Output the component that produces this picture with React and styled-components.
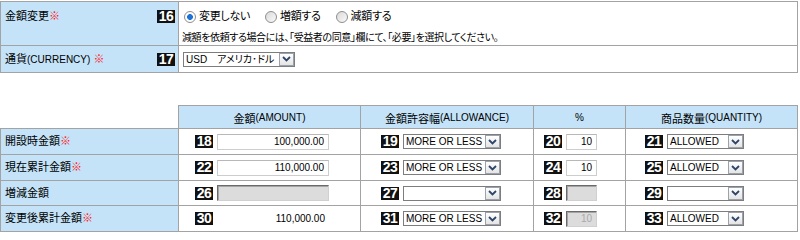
import React from 'react';
import styled, { createGlobalStyle } from 'styled-components';

const GlobalStyle = createGlobalStyle`
  html, body {
    margin: 0;
    padding: 0;
    background: #fff;
  }
  body {
    font-family: "Liberation Sans", "Noto Sans CJK JP", sans-serif;
    font-size: 11px;
    color: #000;
    font-feature-settings: "palt";
  }
`;

const LINE = '1px solid #a3a3a3';
const HEAD_BG = '#c4e3f8';

// data
const rows = [
  {
    label: '開設時金額',
    req: true,
    no: [18, 19, 20, 21],
    amount: { kind: 'input', value: '100,000.00' },
    allowance: 'MORE OR LESS',
    pct: { kind: 'input', value: '10' },
    qty: 'ALLOWED',
  },
  {
    label: '現在累計金額',
    req: true,
    no: [22, 23, 24, 25],
    amount: { kind: 'input', value: '110,000.00' },
    allowance: 'MORE OR LESS',
    pct: { kind: 'input', value: '10' },
    qty: 'ALLOWED',
  },
  {
    label: '増減金額',
    req: false,
    no: [26, 27, 28, 29],
    amount: { kind: 'disabled', value: '' },
    allowance: '',
    pct: { kind: 'disabled', value: '' },
    qty: '',
  },
  {
    label: '変更後累計金額',
    req: true,
    no: [30, 31, 32, 33],
    amount: { kind: 'text', value: '110,000.00' },
    allowance: 'MORE OR LESS',
    pct: { kind: 'disabled', value: '10' },
    qty: 'ALLOWED',
  },
];

const Arrow = () => (
  <svg width="9" height="6" viewBox="0 0 9 6">
    <polyline points="1,1 4.5,4.5 8,1" fill="none" stroke="#2d4569" strokeWidth="1.8" />
  </svg>
);

const Select = ({ value, width }) => (
  <SelectBox $w={width}>
    <SelectValue>{value}</SelectValue>
    <SelectArrow>
      <Arrow />
    </SelectArrow>
  </SelectBox>
);

const Field = ({ field, width }) => {
  if (field.kind === 'text') return <PlainAmount $w={width}>{field.value}</PlainAmount>;
  return (
    <TextBox $w={width} $disabled={field.kind === 'disabled'}>
      {field.value}
    </TextBox>
  );
};

const App = () => {
  return (
    <Page>
      <GlobalStyle />

      {/* 金額変更 / 通貨 */}
      <Grid $cols="179px 1fr" $rows="45px 27px">
        <LabelCell $top $left $start>
          <LabelText>
            金額変更<Req>※</Req>
          </LabelText>
          <Badge>16</Badge>
        </LabelCell>
        <Cell $top $pad={5} $column>
          <RadioGroup>
            <RadioItem>
              <Radio $checked />
              変更しない
            </RadioItem>
            <RadioItem>
              <Radio />
              増額する
            </RadioItem>
            <RadioItem>
              <Radio />
              減額する
            </RadioItem>
          </RadioGroup>
          <Note>減額を依頼する場合には、「受益者の同意」欄にて、「必要」を選択してください。</Note>
        </Cell>

        <LabelCell $left>
          <LabelText>
            通貨<Lat>(CURRENCY)</Lat> <Req>※</Req>
          </LabelText>
          <Badge>17</Badge>
        </LabelCell>
        <Cell $pad={4}>
          <Select value="USD　アメリカ･ドル" width={112} />
        </Cell>
      </Grid>

      {/* 金額・許容幅・数量 */}
      <Grid $cols="179px 182px 173px 92px 1fr" $rows="24px 26px 26px 25px 26px" $gap={32}>
        <Corner />
        <HeadCell $top>
          金額<Lat>(AMOUNT)</Lat>
        </HeadCell>
        <HeadCell $top>
          金額許容幅<Lat>(ALLOWANCE)</Lat>
        </HeadCell>
        <HeadCell $top>
          <Lat>%</Lat>
        </HeadCell>
        <HeadCell $top>
          商品数量<Lat>(QUANTITY)</Lat>
        </HeadCell>

        {rows.map((row) => (
          <React.Fragment key={`amount-row-${row.no[0]}`}>
            <LabelCell $left>
              <LabelText>
                {row.label}
                {row.req && <Req>※</Req>}
              </LabelText>
            </LabelCell>
            <Cell $pad={16}>
              <Badge>{row.no[0]}</Badge>
              <Field field={row.amount} width={112} />
            </Cell>
            <Cell $pad={20}>
              <Badge>{row.no[1]}</Badge>
              <Select value={row.allowance} width={98} />
            </Cell>
            <Cell $pad={10}>
              <Badge>{row.no[2]}</Badge>
              <Field field={row.pct} width={31} />
            </Cell>
            <Cell $pad={19}>
              <Badge>{row.no[3]}</Badge>
              <Select value={row.qty} width={77} />
            </Cell>
          </React.Fragment>
        ))}
      </Grid>
    </Page>
  );
};

export default App;

// style
const Page = styled.div`
  width: 800px;
  padding-top: 1px;
`;

const Grid = styled.div`
  display: grid;
  width: 798px;
  grid-template-columns: ${(p) => p.$cols};
  grid-template-rows: ${(p) => p.$rows};
  margin-top: ${(p) => p.$gap || 0}px;
`;

const Cell = styled.div`
  box-sizing: border-box;
  display: flex;
  flex-direction: ${(p) => (p.$column ? 'column' : 'row')};
  align-items: ${(p) => (p.$column ? 'flex-start' : 'center')};
  gap: 4px;
  padding-left: ${(p) => p.$pad || 0}px;
  padding-top: ${(p) => (p.$column ? '8px' : '0')};
  border-right: ${LINE};
  border-bottom: ${LINE};
  border-top: ${(p) => (p.$top ? LINE : 'none')};
  border-left: ${(p) => (p.$left ? LINE : 'none')};
  background: #fff;
  min-width: 0;
`;

const LabelCell = styled(Cell)`
  background: ${HEAD_BG};
  justify-content: space-between;
  align-items: ${(p) => (p.$start ? 'flex-start' : 'center')};
  padding: ${(p) => (p.$start ? '8px 3px 0 4px' : '0 3px 0 4px')};
`;

const HeadCell = styled(Cell)`
  background: ${HEAD_BG};
  justify-content: center;
  gap: 0;
  padding-top: 1px;
`;

const Corner = styled.div`
  border-right: ${LINE};
  border-bottom: ${LINE};
`;

const LabelText = styled.span`
  font-size: 11px;
  line-height: 13px;
  white-space: nowrap;
`;

const Lat = styled.span`
  font-size: 10px;
`;

const Req = styled.span`
  color: #ff1a1a;
  font-size: 11px;
`;

const Badge = styled.span`
  flex: none;
  display: inline-flex;
  align-items: center;
  justify-content: center;
  width: 18px;
  height: 13px;
  background: #111;
  color: #fff;
  font-family: "Liberation Sans", Arial, sans-serif;
  font-weight: bold;
  font-size: 14px;
  letter-spacing: -0.5px;
  line-height: 13px;
`;

const RadioGroup = styled.div`
  display: flex;
  align-items: center;
  gap: 15px;
  height: 13px;
`;

const RadioItem = styled.label`
  display: flex;
  align-items: center;
  gap: 3px;
  font-size: 11px;
  line-height: 13px;
  letter-spacing: -0.3px;
`;

const Radio = styled.span`
  box-sizing: border-box;
  width: 12px;
  height: 12px;
  border-radius: 50%;
  border: 1px solid #8e8e8e;
  background: ${(p) =>
    p.$checked
      ? 'radial-gradient(circle, #1d72d8 0 2.6px, #fff 3.2px)'
      : 'linear-gradient(135deg, #d9d9d9, #fafafa)'};
`;

const Note = styled.div`
  margin-top: 4px;
  margin-left: -2px;
  font-size: 10px;
  line-height: 13px;
  letter-spacing: -0.4px;
  white-space: nowrap;
`;

const SelectBox = styled.div`
  box-sizing: border-box;
  flex: none;
  display: flex;
  align-items: center;
  width: ${(p) => p.$w}px;
  height: 15px;
  border: 1px solid #7d7d7d;
  background: #fff;
`;

const SelectValue = styled.span`
  flex: 1;
  padding-left: 2px;
  font-size: 10px;
  line-height: 13px;
  white-space: nowrap;
  overflow: hidden;
`;

const SelectArrow = styled.span`
  box-sizing: border-box;
  flex: none;
  display: flex;
  align-items: center;
  justify-content: center;
  width: 15px;
  height: 13px;
  border: 1px solid #9aa3ad;
  background: linear-gradient(#ffffff, #e4e4e4);
`;

const TextBox = styled.div`
  box-sizing: border-box;
  flex: none;
  width: ${(p) => p.$w}px;
  height: 16px;
  padding-right: 4px;
  text-align: right;
  font-size: 10px;
  line-height: 14px;
  color: ${(p) => (p.$disabled ? '#a9a9a9' : '#000')};
  background: ${(p) => (p.$disabled ? '#dcdcdc' : '#fff')};
  border: 1px solid ${(p) => (p.$disabled ? '#d0d0d0' : '#cdcdcd')};
  border-top-color: ${(p) => (p.$disabled ? '#6a6a6a' : '#b8b8b8')};
  border-left-color: ${(p) => (p.$disabled ? '#6a6a6a' : '#cdcdcd')};
  box-shadow: ${(p) => (p.$disabled ? 'inset 1px 1px 0 #a5a5a5' : 'none')};
`;

const PlainAmount = styled.span`
  box-sizing: border-box;
  flex: none;
  width: ${(p) => p.$w}px;
  padding-right: 4px;
  text-align: right;
  font-size: 10px;
`;
